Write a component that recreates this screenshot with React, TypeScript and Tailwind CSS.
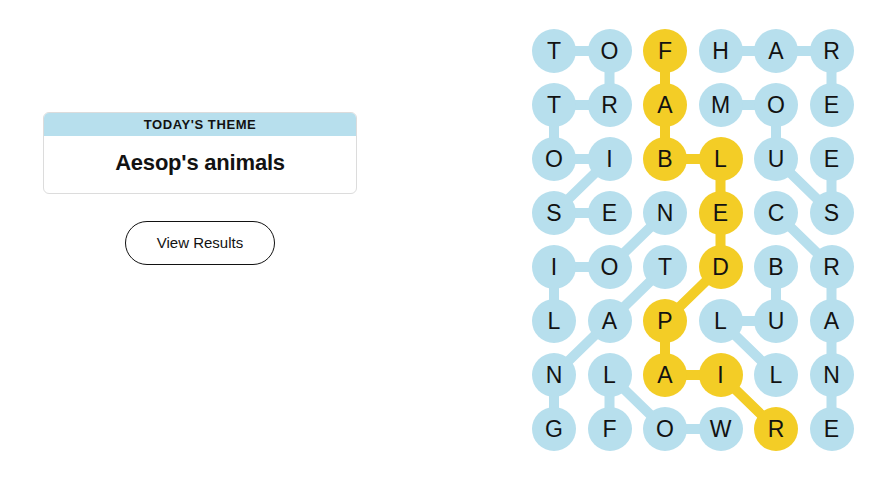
import { Fragment } from 'react';

const rows = ['TOFHAR', 'TRAMOE', 'OIBLUE', 'SENECS', 'IOTDBR', 'LAPLUA', 'NLAILN', 'GFOWRE'];

// words as [row, col] paths
const words: [number, number][][] = [
    [[0, 0], [0, 1], [1, 1], [1, 0], [2, 0], [2, 1], [3, 0], [3, 1]],
    [[0, 3], [0, 4], [0, 5], [1, 5]],
    [[1, 3], [1, 4], [2, 4], [3, 5], [2, 5]],
    [[3, 4], [4, 5], [5, 5], [6, 5], [7, 5]],
    [[5, 0], [4, 0], [4, 1], [3, 2]],
    [[7, 0], [6, 0], [5, 1], [4, 2]],
    [[4, 4], [5, 4], [5, 3], [6, 4]],
    [[7, 3], [7, 2], [6, 1], [7, 1]],
];

const spangram: [number, number][] = [
    [0, 2], [1, 2], [2, 2], [2, 3], [3, 3], [4, 3], [5, 2], [6, 2], [6, 3], [7, 4],
];

const BLUE = '#b7dfed';
const YELLOW = '#f3cd26';

const cx = (c: number) => 22 + c * 55.5;
const cy = (r: number) => 22 + r * 54;

const isSpan = (r: number, c: number) => spangram.some(([a, b]) => a === r && b === c);

const Path = ({ pts, color }: { pts: [number, number][]; color: string }) => (
    <polyline
        points={pts.map(([r, c]) => `${cx(c)},${cy(r)}`).join(' ')}
        fill="none"
        stroke={color}
        strokeWidth={10}
        strokeLinejoin="round"
    />
);

const Board = () => {
    return (
        <div className="relative">
            <svg className="absolute inset-0" width={322} height={422}>
                {words.map((w, i) => (
                    <Path key={i} pts={w} color={BLUE} />
                ))}
                <Path pts={spangram} color={YELLOW} />
            </svg>
            <div className="relative grid grid-cols-[repeat(6,44px)] gap-x-[11.5px] gap-y-[10px]">
                {rows.map((row, r) => (
                    <Fragment key={r}>
                        {row.split('').map((ch, c) => (
                            <div
                                key={c}
                                className={`w-[44px] h-[44px] rounded-full flex items-center justify-center text-[23px] text-[#121212] ${
                                    isSpan(r, c) ? 'bg-[#f3cd26]' : 'bg-[#b7dfed]'
                                }`}
                            >
                                {ch}
                            </div>
                        ))}
                    </Fragment>
                ))}
            </div>
        </div>
    );
};

export default function App() {
    return (
        <div className="flex bg-white w-[889px] h-[488px] font-['Liberation_Sans',Arial,sans-serif] text-[#121212]">
            <div className="ml-[43px] mt-[112px] w-[314px] flex flex-col items-center">
                <div className="w-full rounded-md border border-[#dcdcdc] overflow-hidden">
                    <div className="bg-[#b7dfed] h-[23px] flex items-center justify-center text-[13px] font-semibold tracking-[0.6px]">
                        TODAY'S THEME
                    </div>
                    <div className="h-[57px] flex items-center justify-center text-[22px] font-bold tracking-[-0.2px] pb-[4px]">
                        Aesop's animals
                    </div>
                </div>
                <button className="mt-[27px] w-[150px] h-[44px] rounded-full border border-[#121212] text-[15px] bg-white">
                    View Results
                </button>
            </div>
            <div className="ml-[175px] mt-[29px]">
                <Board />
            </div>
        </div>
    );
}
